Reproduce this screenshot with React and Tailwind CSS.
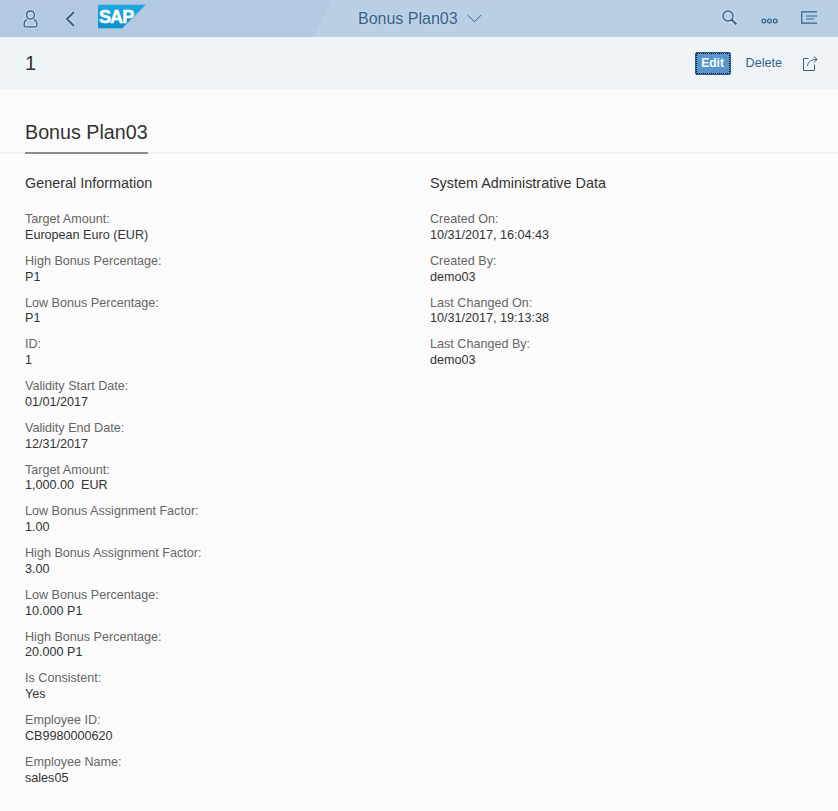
const general = [
  ["Target Amount:", "European Euro (EUR)"],
  ["High Bonus Percentage:", "P1"],
  ["Low Bonus Percentage:", "P1"],
  ["ID:", "1"],
  ["Validity Start Date:", "01/01/2017"],
  ["Validity End Date:", "12/31/2017"],
  ["Target Amount:", "1,000.00\u00a0\u00a0EUR"],
  ["Low Bonus Assignment Factor:", "1.00"],
  ["High Bonus Assignment Factor:", "3.00"],
  ["Low Bonus Percentage:", "10.000 P1"],
  ["High Bonus Percentage:", "20.000 P1"],
  ["Is Consistent:", "Yes"],
  ["Employee ID:", "CB9980000620"],
  ["Employee Name:", "sales05"],
];

const admin = [
  ["Created On:", "10/31/2017, 16:04:43"],
  ["Created By:", "demo03"],
  ["Last Changed On:", "10/31/2017, 19:13:38"],
  ["Last Changed By:", "demo03"],
];

function Field({ label, value }) {
  return (
    <div className="h-[41.77px] text-[12.6px] leading-[15.8px]">
      <div className="text-[#666666]">{label}</div>
      <div className="text-[#333333]">{value}</div>
    </div>
  );
}

function Section({ title, rows }) {
  return (
    <div className="w-[405px]">
      <h3 className="h-[38px] text-[14.4px] leading-[18px] text-[#333333]">{title}</h3>
      {rows.map(([label, value], i) => (
        <Field key={i} label={label} value={value} />
      ))}
    </div>
  );
}

export default function App() {
  return (
    <div className="min-h-[811px] bg-[#fbfbfb] font-['Liberation_Sans',Arial,sans-serif]">
      {/* Shell bar */}
      <div className="relative flex h-[37px] items-center overflow-hidden bg-[#b9cfe6] text-[#346187]">
        <div className="absolute inset-y-0 left-0 w-[332px] bg-[#b2c9e1] [clip-path:polygon(0_0,100%_0,94.3%_100%,0_100%)]" />
        <svg className="relative ml-[23px] h-[18px] w-[15px] drop-shadow-[0_0_1px_#ffffff]" viewBox="0 0 15 18" fill="none" stroke="currentColor" strokeWidth="1.3">
          <path d="M7.5 1C5 1 3.6 2.8 3.6 5C3.6 7.3 5 9 7.5 9C10 9 11.4 7.3 11.4 5C11.4 2.8 10 1 7.5 1Z" />
          <path d="M4 9.6C2.2 10.3 1.2 11.6 1.2 13.4V15.4C1.2 16.3 1.8 16.9 2.7 16.9H12.3C13.2 16.9 13.8 16.3 13.8 15.4V13.4C13.8 11.6 12.8 10.3 11 9.6" />
        </svg>
        <svg className="relative ml-[27px] h-[16px] w-[11px] drop-shadow-[0_0_1px_#ffffff]" viewBox="0 0 11 16" fill="none" stroke="currentColor" strokeWidth="2">
          <path d="M9 1L2 8L9 15" />
        </svg>
        <svg className="relative ml-[22px] h-[24px] w-[48px] -translate-y-[2.5px]" viewBox="0 0 48 24">
          <defs>
            <linearGradient id="sapBlue" x1="0" y1="0" x2="0" y2="1">
              <stop offset="0" stopColor="#1ea9e3" />
              <stop offset="1" stopColor="#0a8fd0" />
            </linearGradient>
          </defs>
          <polygon points="0,0 48,0 24,24 0,24" fill="url(#sapBlue)" />
          <text x="1" y="18" fill="#ffffff" stroke="#ffffff" strokeWidth="0.5" fontSize="18" fontWeight="700" fontFamily="Liberation Sans" letterSpacing="-0.9">
            SAP
          </text>
        </svg>
        <div className="absolute inset-y-0 left-[358px] flex items-center">
          <span className="text-[16px] text-[#346187] [text-shadow:0_0_2px_#ffffff80]">Bonus Plan03</span>
          <svg className="ml-[9px] h-[9px] w-[15px]" viewBox="0 0 15 9" fill="none" stroke="currentColor" strokeWidth="1">
            <path d="M0.7 1L7.5 7.8L14.3 1" />
          </svg>
        </div>
        <div className="relative ml-auto flex items-center">
          <svg className="-mt-[3px] h-[15px] w-[15px] drop-shadow-[0_0_1px_#ffffff]" viewBox="0 0 15 15" fill="none" stroke="currentColor" strokeWidth="1.4">
            <circle cx="6" cy="6" r="5" />
            <path d="M9.6 9.6L14.3 14.3" strokeWidth="2" />
          </svg>
          <svg className="ml-[24px] mt-[5px] h-[6px] w-[17px]" viewBox="0 0 17 6" fill="none" stroke="currentColor" strokeWidth="1.2">
            <circle cx="2.8" cy="3" r="1.9" />
            <circle cx="8.5" cy="3" r="1.9" />
            <circle cx="14.2" cy="3" r="1.9" />
          </svg>
          <svg className="-mt-[2px] ml-[23px] mr-[21px] h-[13px] w-[16px]" viewBox="0 0 16 13" fill="none" stroke="currentColor" strokeWidth="1.2">
            <path d="M16 0.8H0.7V12.2H16" />
            <path d="M5 5H16M5 8H13" />
          </svg>
        </div>
      </div>

      {/* Object toolbar */}
      <div className="flex h-[52px] items-center bg-[#eff4f9] pl-[25px] pr-[20px]">
        <span className="text-[20px] text-[#333333]">1</span>
        <div className="ml-auto flex items-center text-[12.6px] text-[#346187]">
          <button className="flex h-[23px] w-[36px] items-center justify-center rounded-[2px] border border-[#2b5f8e] bg-[#5496cd] text-[12px] font-bold text-white outline-1 -outline-offset-2 outline-dotted outline-black">
            Edit
          </button>
          <span className="ml-[15px]">Delete</span>
          <svg className="ml-[21px] h-[15px] w-[15px]" viewBox="0 0 15 15" fill="none" stroke="currentColor" strokeWidth="1">
            <path d="M5.5 2.5H0.5V14.5H11.5V8.5" />
            <path d="M4.5 10C5 6 8 3.5 14 3.5M10.8 0.5L14.2 3.5L10.8 6.5" />
          </svg>
        </div>
      </div>

      {/* Tab header */}
      <div className="h-[65px] border-b-2 border-[#f2f2f2] px-[25px]">
        <div className="flex h-[65px] w-[123px] items-end whitespace-nowrap border-b-2 border-[#8c8c8c] pb-[8px] text-[19.7px] leading-[24px] text-[#333333]">
          Bonus Plan03
        </div>
      </div>

      {/* Form columns */}
      <div className="flex pl-[25px] pt-[20px]">
        <Section title="General Information" rows={general} />
        <Section title="System Administrative Data" rows={admin} />
      </div>
    </div>
  );
}
